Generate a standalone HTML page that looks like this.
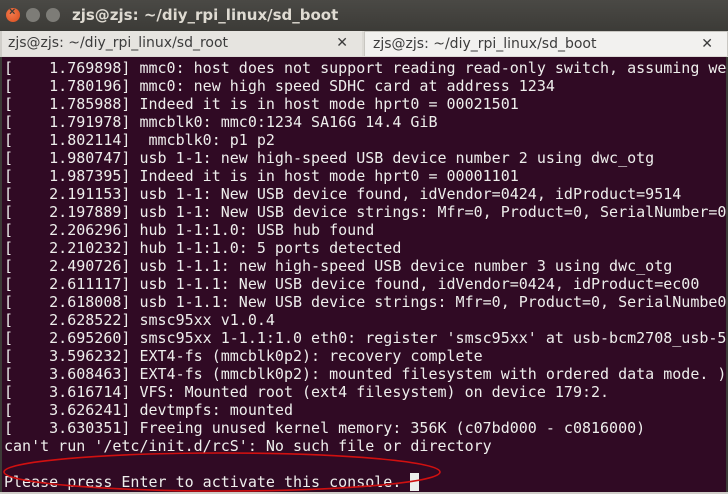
<!DOCTYPE html>
<html><head><style>
body{margin:0;width:728px;height:494px;overflow:hidden;background:#3c3b37;font-family:"Liberation Sans",sans-serif}
#title{position:absolute;left:0;top:0;width:728px;height:31px;background:linear-gradient(#4a4945,#3c3b37);}
#title .t{position:absolute;left:72px;top:6px;color:#dfdbd2;font-weight:bold;font-size:15px;font-family:"DejaVu Sans",sans-serif}
.b{position:absolute;top:8px;width:14px;height:14px;border-radius:50%}
#tabs{position:absolute;left:0;top:31px;width:728px;height:26px;background:#dcdad5;border-left:2px solid #cfcdc8}
.tab{position:absolute;top:0;height:25px;font-family:"DejaVu Sans",sans-serif;font-size:14px;color:#3c3c3c;line-height:24px}
.tab .x{position:absolute;right:14px;top:0;font-weight:bold;font-size:14px}
#term{position:absolute;left:2px;top:57px;width:724px;height:435px;background:#300a24;color:#eeeeec;font-family:"DejaVu Sans Mono",monospace;font-size:15px;line-height:18px;white-space:pre;padding-left:2px;padding-top:2px;box-sizing:border-box;overflow:hidden}
#frame{position:absolute;left:0;top:492px;width:728px;height:2px;background:#cfcdc8}
</style></head><body>
<div id="title">
<div class="b" style="left:6px;background:radial-gradient(circle at 40% 40%,#f27a4d,#d94c1c)"><span style="position:absolute;left:3px;top:-2px;font-size:11px;color:#3c3b37;font-weight:bold">×</span></div>
<div class="b" style="left:26px;background:#7d7c77"></div>
<div class="b" style="left:46px;background:#7d7c77"></div>
<div class="t">zjs@zjs: ~/diy_rpi_linux/sd_boot</div>
</div>
<div id="tabs">
<div class="tab" style="left:0;width:360px;background:#e6e4e0;padding-left:6px;box-sizing:border-box">zjs@zjs: ~/diy_rpi_linux/sd_root<span class="x">✕</span></div>
<div class="tab" style="left:362px;width:364px;background:#f2f1ef;border:1px solid #c8c6c1;border-bottom:none;padding-left:8px;box-sizing:border-box">zjs@zjs: ~/diy_rpi_linux/sd_boot<span class="x">✕</span></div>
</div>
<div id="term">[    1.769898] mmc0: host does not support reading read-only switch, assuming we
[    1.780196] mmc0: new high speed SDHC card at address 1234
[    1.785988] Indeed it is in host mode hprt0 = 00021501
[    1.791978] mmcblk0: mmc0:1234 SA16G 14.4 GiB
[    1.802114]  mmcblk0: p1 p2
[    1.980747] usb 1-1: new high-speed USB device number 2 using dwc_otg
[    1.987395] Indeed it is in host mode hprt0 = 00001101
[    2.191153] usb 1-1: New USB device found, idVendor=0424, idProduct=9514
[    2.197889] usb 1-1: New USB device strings: Mfr=0, Product=0, SerialNumber=0
[    2.206296] hub 1-1:1.0: USB hub found
[    2.210232] hub 1-1:1.0: 5 ports detected
[    2.490726] usb 1-1.1: new high-speed USB device number 3 using dwc_otg
[    2.611117] usb 1-1.1: New USB device found, idVendor=0424, idProduct=ec00
[    2.618008] usb 1-1.1: New USB device strings: Mfr=0, Product=0, SerialNumbe0
[    2.628522] smsc95xx v1.0.4
[    2.695260] smsc95xx 1-1.1:1.0 eth0: register 'smsc95xx' at usb-bcm2708_usb-5
[    3.596232] EXT4-fs (mmcblk0p2): recovery complete
[    3.608463] EXT4-fs (mmcblk0p2): mounted filesystem with ordered data mode. )
[    3.616714] VFS: Mounted root (ext4 filesystem) on device 179:2.
[    3.626241] devtmpfs: mounted
[    3.630351] Freeing unused kernel memory: 356K (c07bd000 - c0816000)
can't run '/etc/init.d/rcS': No such file or directory

Please press Enter to activate this console. <span style="background:#eeeeec"> </span></div>
<div id="frame"></div>
<svg style="position:absolute;left:0;top:0" width="728" height="494"><ellipse cx="222" cy="472" rx="218" ry="19" fill="none" stroke="#d01010" stroke-width="1.6"/></svg>
</body></html>
